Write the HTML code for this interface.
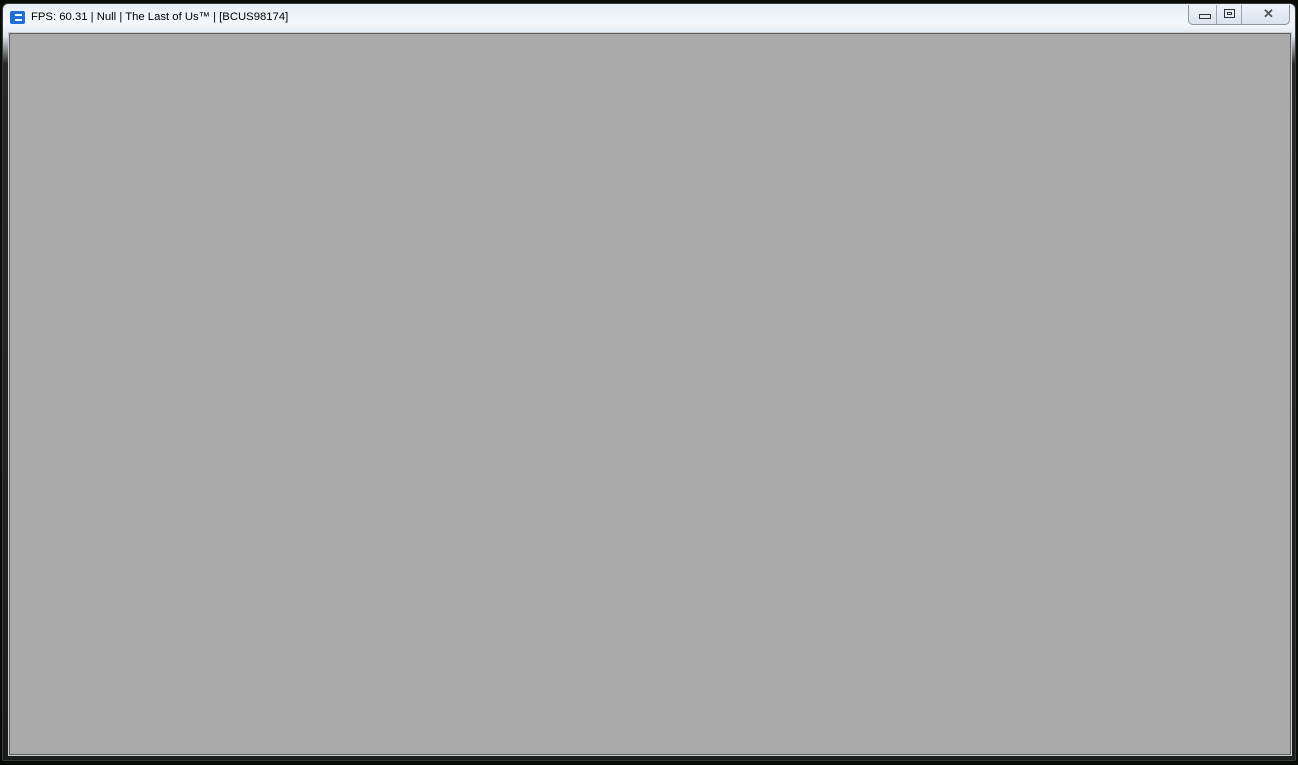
<!DOCTYPE html>
<html><head><meta charset="utf-8"><style>
html,body{margin:0;padding:0;width:1298px;height:765px;overflow:hidden;background:#0a0c08;font-family:"Liberation Sans",sans-serif}
.frame{position:absolute;left:2px;top:3px;width:1294px;height:758px;border:1px solid #3a3a3a;border-radius:6px 6px 2px 2px;background:linear-gradient(to bottom,#e8eef5 0,#f3f7fb 20px,#dce6f0 32px,#262a26 60px,#1b1e1b 100%);box-sizing:border-box}
.client{position:absolute;left:9px;top:33px;width:1282px;height:722px;background:#aaaaaa;border:1px solid #5e5e5e;box-sizing:border-box;box-shadow:0 0 0 1px #c9ced4}
.title{position:absolute;left:31px;top:11px;font-size:11.3px;color:#000}
.icon{position:absolute;left:10px;top:11px;width:15px;height:13px;background:#1f6fd8;border-radius:2px}
.icon:after{content:"";position:absolute;left:5px;top:3px;width:7px;height:7px;border-top:2px solid #fff;border-bottom:2px solid #fff;box-sizing:border-box}
.btns{position:absolute;left:1188px;top:5px;width:100px;height:19px;border:1px solid #8a95a2;border-top:none;border-radius:0 0 5px 5px;background:linear-gradient(#eef3f8,#d9e3ee)}
.btns div{position:absolute;top:0;height:19px;border-right:1px solid #9aa5b2}
.min:after{content:"";position:absolute;left:10px;top:9px;width:10px;height:3px;border:1px solid #333}
.max:after{content:"";position:absolute;left:8px;top:4px;width:9px;height:7px;border:1px solid #333;box-shadow:inset 0 0 0 2px #e5ecf3,inset 0 0 0 3px #333}
.cls{position:absolute;left:74px;top:1px;font-size:13px;color:#555;font-weight:bold}
</style></head><body>
<div class="frame"></div>
<div class="icon"></div>
<div class="title">FPS: 60.31 | Null | The Last of Us™ | [BCUS98174]</div>
<div class="btns"><div class="min" style="left:0;width:27px"></div><div class="max" style="left:27px;width:25px"></div><span class="cls">✕</span></div>
<div class="client"></div>
</body></html>
